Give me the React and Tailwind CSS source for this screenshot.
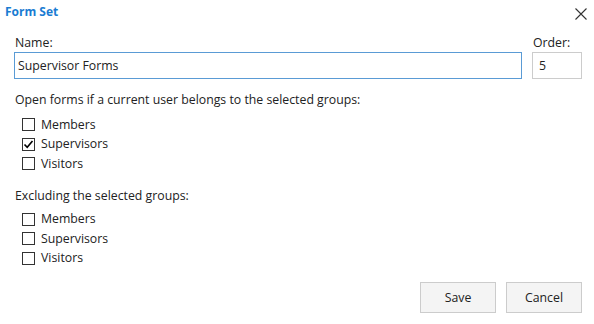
import React from "react";

function Check({ checked, label }) {
  return (
    <label className="flex items-center h-[19.5px] pl-[8px]">
      <span className="w-[13px] h-[13px] border border-[#333333] bg-white flex items-center justify-center">
        {checked && (
          <svg width="11" height="11" viewBox="0 0 11 11">
            <path d="M1.5 5.5 L4.2 8.3 L9.5 2" fill="none" stroke="#000" strokeWidth="1.6" />
          </svg>
        )}
      </span>
      <span className="ml-[6px]">{label}</span>
    </label>
  );
}

export default function App() {
  return (
    <div
      className="w-[594px] h-[324px] bg-white text-[#222222] text-[12.3px] leading-[18px] relative"
      style={{ fontFamily: '"Open Sans", "Noto Sans", sans-serif' }}
    >
      <div className="flex items-center justify-between h-[22px] pl-[5px] pr-[3px] pt-[2px]">
        <div className="font-bold text-[12px] text-[#1a7cd2]">Form Set</div>
        <svg width="14" height="14" viewBox="0 0 14 14" className="mr-[3px] mt-[3px]">
          <path d="M1.5 1.5 L12.5 12.5 M12.5 1.5 L1.5 12.5" stroke="#333" strokeWidth="1.1" />
        </svg>
      </div>
      <div className="pl-[14px] pr-[12px] pt-[12px]">
        <div className="flex gap-[10px]">
          <div className="flex-1 flex flex-col">
            <div className="pl-[1px] h-[18px]">Name:</div>
            <div className="h-[27px] border border-[#5a9bd5] flex items-center px-[3px]">Supervisor Forms</div>
          </div>
          <div className="w-[50px] flex flex-col">
            <div className="pl-[1px] h-[18px]">Order:</div>
            <div className="h-[27px] border border-[#cccccc] flex items-center px-[6px]">5</div>
          </div>
        </div>
        <div className="pl-[1px] mt-[12px]">Open forms if a current user belongs to the selected groups:</div>
        <div className="mt-[6px]">
          <Check label="Members" />
          <Check label="Supervisors" checked />
          <Check label="Visitors" />
        </div>
        <div className="pl-[1px] mt-[13px]">Excluding the selected groups:</div>
        <div className="mt-[5px]">
          <Check label="Members" />
          <Check label="Supervisors" />
          <Check label="Visitors" />
        </div>
        <div className="flex justify-end gap-[10px] mt-[14px]">
          <button className="w-[76px] h-[31px] border border-[#cccccc] bg-[#f4f4f4]">Save</button>
          <button className="w-[76px] h-[31px] border border-[#cccccc] bg-[#f4f4f4]">Cancel</button>
        </div>
      </div>
    </div>
  );
}
